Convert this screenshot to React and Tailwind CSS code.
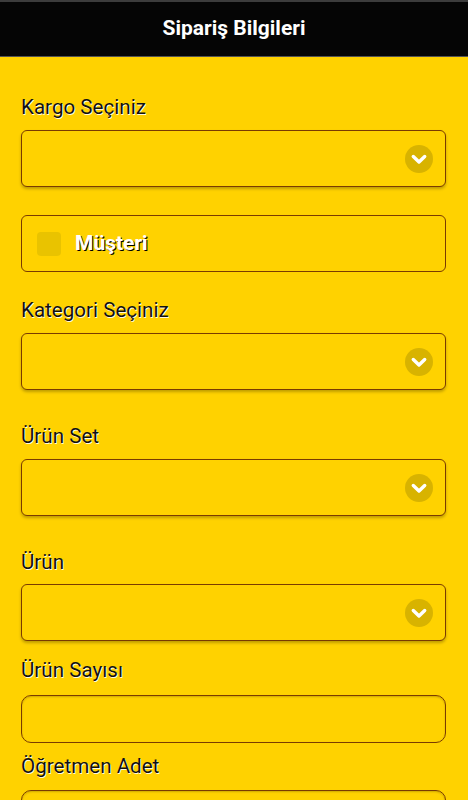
import React from "react";

const labelShadow = "[text-shadow:1px_1px_0_rgba(255,255,255,0.9)]";

function Chevron() {
  return (
    <span className="flex h-[28px] w-[28px] items-center justify-center rounded-full bg-[#d8b300]">
      <svg width="18" height="18" viewBox="0 0 18 18" fill="none">
        <path d="M3.3 6.5l5.7 5.5 5.7-5.5" stroke="#fff" strokeWidth="3.4" strokeLinecap="round" strokeLinejoin="round" />
      </svg>
    </span>
  );
}

function Label({ children, className = "" }) {
  return (
    <div className={`text-[20.6px] leading-[22px] text-[#111] ${labelShadow} ${className}`}>
      {children}
    </div>
  );
}

function SelectBox() {
  return (
    <div className="flex h-[57px] items-center justify-end rounded-md border border-[#7a3b00] bg-[#ffd200] pr-3 shadow-[0_2px_3px_rgba(0,0,0,0.25)]">
      <Chevron />
    </div>
  );
}

function InputBox() {
  return (
    <div className="h-[48px] rounded-[10px] border border-[#7a3b00] bg-[#ffd200] shadow-[inset_0_1px_2px_rgba(0,0,0,0.2)]" />
  );
}

export default function App() {
  return (
    <div className="h-[800px] overflow-hidden bg-[#ffd200] font-['Roboto',sans-serif]">
      <header className="flex h-[57px] items-center justify-center border-t-2 border-b border-t-[#3c3c3c] border-b-[#555] bg-[#050505]">
        <h1 className="text-[21px] font-bold text-white">Sipariş Bilgileri</h1>
      </header>

      <main className="px-[21px] pr-[22px]">
        <Label className="mt-[39px] mb-[12px]">Kargo Seçiniz</Label>
        <SelectBox />

        <div className="mt-[28px] flex h-[57px] items-center gap-[14px] rounded-md border border-[#7a3b00] pl-[15px]">
          <span className="h-[24px] w-[24px] rounded-[4px] bg-[#e9c300]" />
          <span className="text-[21px] font-bold text-white [text-shadow:1px_1px_0_#000]">Müşteri</span>
        </div>

        <Label className="mt-[27px] mb-[12px]">Kategori Seçiniz</Label>
        <SelectBox />

        <Label className="mt-[35px] mb-[12px]">Ürün Set</Label>
        <SelectBox />

        <Label className="mt-[35px] mb-[11px]">Ürün</Label>
        <SelectBox />

        <Label className="mt-[18px] mb-[14px]">Ürün Sayısı</Label>
        <InputBox />

        <Label className="mt-[12px] mb-[13px]">Öğretmen Adet</Label>
        <InputBox />
      </main>
    </div>
  );
}
